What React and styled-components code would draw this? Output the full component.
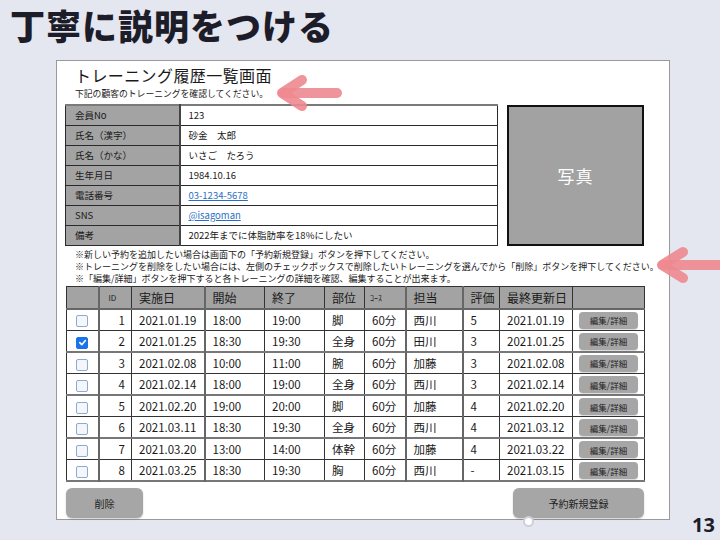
import React from "react";
import styled, { createGlobalStyle } from "styled-components";

const Global = createGlobalStyle`
  html, body { margin: 0; padding: 0; }
  body { background: #e4e6f0; font-family: "Noto Sans CJK JP", "Noto Sans", sans-serif; color: #222; }
  * { box-sizing: border-box; }
`;

const Page = styled.div`
  position: relative;
  width: 720px;
  height: 540px;
  overflow: hidden;
  background: #e4e6f0;
  display: flex;
  flex-direction: column;
`;

const SlideTitle = styled.h1`
  margin: 0;
  padding: 4px 0 0 10px;
  height: 60px;
  font-family: "Noto Sans CJK JP", sans-serif;
  font-weight: 900;
  font-size: 35px;
  line-height: 42px;
  color: #1c1d29;
  letter-spacing: 1px;
`;

const Panel = styled.div`
  margin-left: 56px;
  width: 614px;
  height: 460px;
  background: #fff;
  border: 1px solid #9a9a9a;
  padding: 4px 8px 0 8px;
  display: flex;
  flex-direction: column;
`;

const ScreenTitle = styled.div`
  font-size: 16px;
  line-height: 20px;
  padding-left: 10px;
  letter-spacing: 0.4px;
  color: #1a1a1a;
`;

const SubTitle = styled.div`
  margin-top: 2px;
  font-size: 8.8px;
  line-height: 13px;
  padding-left: 10px;
  color: #222;
`;

const TopRow = styled.div`
  margin-top: 4px;
  display: flex;
  align-items: flex-start;
  gap: 9px;
`;

const InfoTable = styled.table`
  width: 433px;
  border-collapse: collapse;
  table-layout: fixed;
  border-top: 2px solid #7a7a7a;
`;

const InfoRow = styled.tr`
  height: 20px;
  border-bottom: 1px solid #2a2a2a;
`;

const InfoLabel = styled.td`
  width: 114px;
  background: #a3a3a3;
  font-size: 9.5px;
  padding: 0 0 0 9px;
  border-left: 1px solid #2a2a2a;
  border-right: 2px solid #444;
  color: #1a1a1a;
`;

const InfoValue = styled.td`
  font-size: 9.5px;
  padding: 0 0 0 8px;
  border-right: 1px solid #2a2a2a;
  color: #1a1a1a;
`;

const Link = styled.span`
  color: #2b6fc4;
  text-decoration: underline;
`;

const Photo = styled.div`
  margin-top: 1px;
  width: 137px;
  height: 141px;
  background: #a2a2a2;
  border: 2px solid #111;
  display: flex;
  align-items: center;
  justify-content: center;
  color: #fff;
  font-size: 17px;
  letter-spacing: 1px;
`;

const Notes = styled.div`
  margin-top: 3px;
  padding-left: 10px;
  font-size: 9px;
  line-height: 12px;
  color: #1a1a1a;
  white-space: nowrap;
`;

const NoteLine = styled.div`
  height: 12px;
`;

const Table = styled.table`
  margin-top: 1px;
  margin-left: 1px;
  width: 578px;
  border-collapse: collapse;
  table-layout: fixed;
  border: 1.5px solid #333;
`;

const HeadCell = styled.th`
  height: 22px;
  background: #a3a3a3;
  font-weight: normal;
  font-size: ${(p) => (p.$small ? "8px" : "12px")};
  text-align: left;
  padding: 0 0 0 ${(p) => (p.$pad ? p.$pad : 7)}px;
  border-left: ${(p) => (p.$thick ? "2px solid #666" : "1px solid #333")};
  border-bottom: 2px solid #666;
  color: #1a1a1a;
  white-space: nowrap;
  overflow: hidden;
`;

const Row = styled.tr`
  height: 21.6px;
  border-bottom: ${(p) => (p.$thick ? "2px solid #777" : "1px solid #333")};
`;

const Cell = styled.td`
  font-size: 11.5px;
  padding: 0 ${(p) => (p.$right ? "6px" : "0")} 0 ${(p) => (p.$right ? "0" : "7px")};
  text-align: ${(p) => (p.$right ? "right" : p.$center ? "center" : "left")};
  border-left: ${(p) => (p.$thick ? "2px solid #666" : "1px solid #333")};
  color: #1a1a1a;
  white-space: nowrap;
  ${(p) => (p.$center ? "padding: 0;" : "")}
`;

const Check = styled.span`
  display: inline-flex;
  align-items: center;
  justify-content: center;
  width: 12px;
  height: 12px;
  border-radius: 2px;
  vertical-align: middle;
  border: 1px solid ${(p) => (p.$on ? "#1a73e8" : "#8fa9cf")};
  background: ${(p) => (p.$on ? "#1a73e8" : "#f3f7fc")};
`;

const EditButton = styled.span`
  display: inline-flex;
  align-items: center;
  justify-content: center;
  width: 59px;
  height: 17px;
  border-radius: 4px;
  background: #a6a6a6;
  font-size: 8.5px;
  color: #222;
  box-shadow: 0 1px 1px rgba(0, 0, 0, 0.15);
  vertical-align: middle;
`;

const ButtonRow = styled.div`
  margin-top: 6px;
  display: flex;
  justify-content: space-between;
  padding: 0 17px 0 1px;
`;

const BigButton = styled.div`
  width: ${(p) => p.$w}px;
  height: 30px;
  border-radius: 6px;
  background: #a6a6a6;
  display: flex;
  align-items: center;
  justify-content: center;
  font-size: 10px;
  color: #222;
  box-shadow: 0 1px 2px rgba(0, 0, 0, 0.2);
`;

const PageNumber = styled.div`
  position: absolute;
  right: 5px;
  bottom: 5px;
  font-family: "Noto Sans", sans-serif;
  font-weight: 700;
  font-size: 20px;
  line-height: 20px;
  color: #1c1d29;
`;

const Cursor = styled.div`
  position: absolute;
  left: 523px;
  top: 516px;
  width: 11px;
  height: 11px;
  border-radius: 50%;
  background: #fff;
  border: 2px solid #d0d0d8;
`;

const Overlay = styled.svg`
  position: absolute;
  left: 0;
  top: 0;
  pointer-events: none;
`;

const info = [
  ["会員No", "123"],
  ["氏名（漢字）", "砂金　太郎"],
  ["氏名（かな）", "いさご　たろう"],
  ["生年月日", "1984.10.16"],
  ["電話番号", <Link key="t">03-1234-5678</Link>],
  ["SNS", <Link key="s">@isagoman</Link>],
  ["備考", "2022年までに体脂肪率を18%にしたい"],
];

const rows = [
  [1, "2021.01.19", "18:00", "19:00", "脚", "60分", "西川", "5", "2021.01.19"],
  [2, "2021.01.25", "18:30", "19:30", "全身", "60分", "田川", "3", "2021.01.25"],
  [3, "2021.02.08", "10:00", "11:00", "腕", "60分", "加藤", "3", "2021.02.08"],
  [4, "2021.02.14", "18:00", "19:00", "全身", "60分", "西川", "3", "2021.02.14"],
  [5, "2021.02.20", "19:00", "20:00", "脚", "60分", "加藤", "4", "2021.02.20"],
  [6, "2021.03.11", "18:30", "19:30", "全身", "60分", "西川", "4", "2021.03.12"],
  [7, "2021.03.20", "13:00", "14:00", "体幹", "60分", "加藤", "4", "2021.03.22"],
  [8, "2021.03.25", "18:30", "19:30", "胸", "60分", "西川", "-", "2021.03.15"],
];

const widths = [32, 33, 73, 60, 60, 40, 41, 57, 37, 73, 72];

export default function App() {
  return (
    <>
      <Global />
      <Page>
        <SlideTitle>丁寧に説明をつける</SlideTitle>
        <Panel>
          <ScreenTitle>トレーニング履歴一覧画面</ScreenTitle>
          <SubTitle>下記の顧客のトレーニングを確認してください。</SubTitle>
          <TopRow>
            <InfoTable>
              <tbody>
                {info.map(([k, v]) => (
                  <InfoRow key={k}>
                    <InfoLabel>{k}</InfoLabel>
                    <InfoValue>{v}</InfoValue>
                  </InfoRow>
                ))}
              </tbody>
            </InfoTable>
            <Photo>写真</Photo>
          </TopRow>
          <Notes>
            <NoteLine>※新しい予約を追加したい場合は画面下の「予約新規登録」ボタンを押下してください。</NoteLine>
            <NoteLine>※トレーニングを削除をしたい場合には、左側のチェックボックスで削除したいトレーニングを選んでから「削除」ボタンを押下してください。</NoteLine>
            <NoteLine>※「編集/詳細」ボタンを押下すると各トレーニングの詳細を確認、編集することが出来ます。</NoteLine>
          </Notes>
          <Table>
            <colgroup>
              {widths.map((w, i) => (
                <col key={i} style={{ width: w }} />
              ))}
            </colgroup>
            <thead>
              <tr>
                <HeadCell />
                <HeadCell $thick $small $pad={9}>ID</HeadCell>
                <HeadCell>実施日</HeadCell>
                <HeadCell $thick>開始</HeadCell>
                <HeadCell>終了</HeadCell>
                <HeadCell>部位</HeadCell>
                <HeadCell $small $pad={5}>ｺｰｽ</HeadCell>
                <HeadCell $thick>担当</HeadCell>
                <HeadCell $thick>評価</HeadCell>
                <HeadCell>最終更新日</HeadCell>
                <HeadCell />
              </tr>
            </thead>
            <tbody>
              {rows.map((r, i) => (
                <Row key={r[0]} $thick={i % 2 === 1}>
                  <Cell $center>
                    <Check $on={r[0] === 2}>
                      {r[0] === 2 && (
                        <svg width="9" height="9" viewBox="0 0 10 10">
                          <path d="M2 5.2 L4.2 7.4 L8.2 2.8" fill="none" stroke="#fff" strokeWidth="1.8" strokeLinecap="round" strokeLinejoin="round" />
                        </svg>
                      )}
                    </Check>
                  </Cell>
                  <Cell $thick $right>{r[0]}</Cell>
                  <Cell>{r[1]}</Cell>
                  <Cell $thick>{r[2]}</Cell>
                  <Cell>{r[3]}</Cell>
                  <Cell>{r[4]}</Cell>
                  <Cell>{r[5]}</Cell>
                  <Cell $thick>{r[6]}</Cell>
                  <Cell $thick>{r[7]}</Cell>
                  <Cell>{r[8]}</Cell>
                  <Cell $center>
                    <EditButton>編集/詳細</EditButton>
                  </Cell>
                </Row>
              ))}
            </tbody>
          </Table>
          <ButtonRow>
            <BigButton $w={77}>削除</BigButton>
            <BigButton $w={131}>予約新規登録</BigButton>
          </ButtonRow>
        </Panel>
        <Cursor />
        <PageNumber>13</PageNumber>
        <Overlay width="720" height="540" viewBox="0 0 720 540">
          <g stroke="#ee8890" strokeOpacity="0.9" strokeWidth="10" strokeLinecap="round" strokeLinejoin="round" fill="none">
            <path d="M337 93 L283 93" />
            <path d="M302 80 L282 93 L302 106" />
            <path d="M728 265 L663 265" />
            <path d="M683 252 L662 265 L683 278" />
          </g>
        </Overlay>
      </Page>
    </>
  );
}
